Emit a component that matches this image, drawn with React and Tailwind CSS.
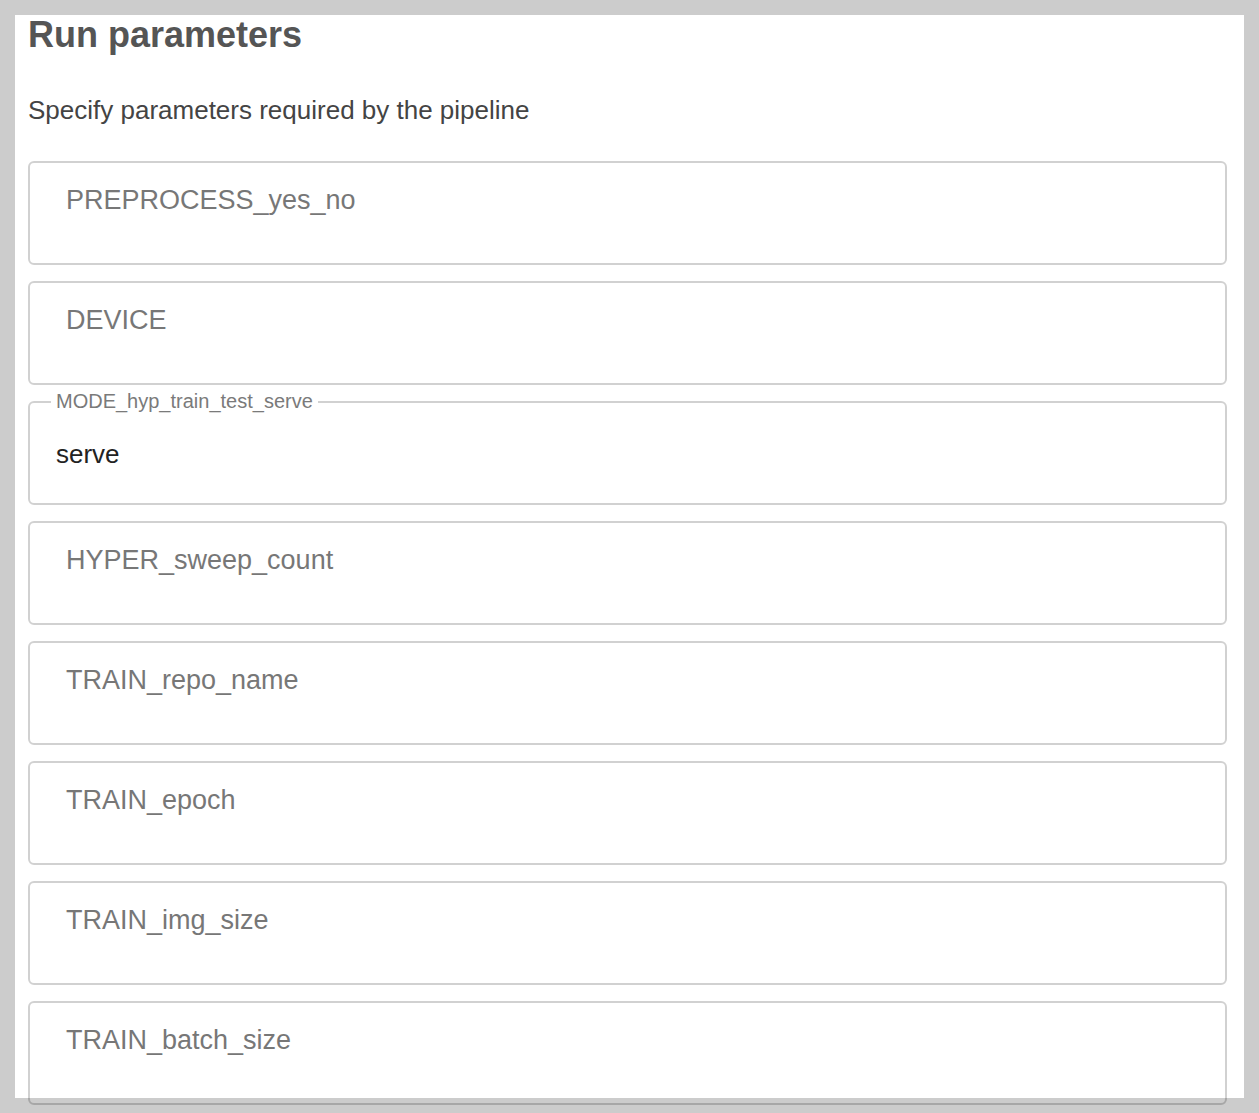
const params = [
  { name: "PREPROCESS_yes_no" },
  { name: "DEVICE" },
  { name: "MODE_hyp_train_test_serve", value: "serve" },
  { name: "HYPER_sweep_count" },
  { name: "TRAIN_repo_name" },
  { name: "TRAIN_epoch" },
  { name: "TRAIN_img_size" },
  { name: "TRAIN_batch_size" },
];

const ParamField = ({ name, value }) => {
  if (value) {
    return (
      <div className="relative h-[104px] shrink-0 rounded-[6px] border-2 border-[rgba(0,0,0,0.18)] flex items-center pl-[26px]">
        <span className="absolute left-[21px] top-[-12px] bg-white px-[5px] text-[20px] leading-[20px] text-[#7a7a7a]">
          {name}
        </span>
        <span className="text-[26px] leading-[26px] text-[#222] pt-[2px]">{value}</span>
      </div>
    );
  }
  return (
    <div className="h-[104px] shrink-0 rounded-[6px] border-2 border-[rgba(0,0,0,0.18)] pl-[36px] pt-[24px]">
      <span className="text-[27px] leading-[27px] text-[#777]">{name}</span>
    </div>
  );
};

export default function App() {
  return (
    <div
      className="h-[1113px] overflow-hidden bg-[#cccccc] p-[15px]"
      style={{ fontFamily: '"Liberation Sans", Arial, sans-serif' }}
    >
      <div className="h-[1083px] bg-white pl-[13px] pr-[17px]">
        <h1 className="text-[36px] leading-[40px] font-bold text-[#555]">
          Run parameters
        </h1>
        <p className="mt-[40px] text-[26px] leading-[30px] text-[#444]">
          Specify parameters required by the pipeline
        </p>
        <div className="mt-[36px] flex flex-col gap-[16px]">
          {params.map((p) => (
            <ParamField key={p.name} name={p.name} value={p.value} />
          ))}
        </div>
      </div>
    </div>
  );
}
